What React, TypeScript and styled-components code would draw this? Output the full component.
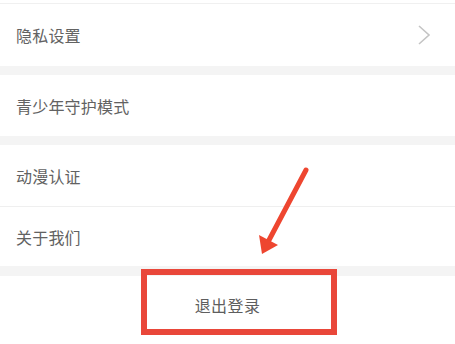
import React from 'react';
import styled, { createGlobalStyle } from 'styled-components';

const GlobalStyle = createGlobalStyle`
  html, body {
    margin: 0;
    padding: 0;
    background: #ffffff;
  }
  body {
    font-family: "Noto Sans CJK SC", "Noto Sans", sans-serif;
  }
`;

const Page = styled.div`
  position: relative;
  width: 455px;
  height: 344px;
  overflow: hidden;
  background: #f4f4f4;
`;

const Group = styled.div`
  background: #ffffff;
  display: flex;
  flex-direction: column;
`;

const TopEdge = styled.div`
  height: 3px;
  background: #ffffff;
  border-bottom: 1px solid #f0f0f0;
`;

const Row = styled.div<{ $h: number; $divider?: boolean }>`
  height: ${p => p.$h}px;
  display: flex;
  align-items: center;
  justify-content: space-between;
  padding: 0 24px 0 16px;
  box-sizing: border-box;
  border-bottom: ${p => (p.$divider ? '1px solid #efefef' : 'none')};
`;

const Label = styled.span`
  font-size: 16px;
  letter-spacing: 0.2px;
  color: #626262;
`;

const Gap = styled.div<{ $h: number }>`
  height: ${p => p.$h}px;
  background: #f4f4f4;
`;

const Logout = styled.div`
  height: 68px;
  background: #ffffff;
  display: flex;
  justify-content: center;
  padding-top: 18px;
  box-sizing: border-box;
`;

const LogoutText = styled.span`
  font-size: 16px;
  letter-spacing: 0.4px;
  color: #5e5e5e;
  line-height: 22px;
`;

const Highlight = styled.div`
  position: absolute;
  left: 141px;
  top: 269px;
  width: 196px;
  height: 66px;
  border: 6px solid #e9473a;
  box-sizing: border-box;
`;

const Overlay = styled.svg`
  position: absolute;
  left: 0;
  top: 0;
  pointer-events: none;
`;

const Chevron = () => (
  <svg width="14" height="22" viewBox="0 0 14 22">
    <path d="M2 2 L12 11 L2 20" fill="none" stroke="#c4c4c4" strokeWidth="1.6" />
  </svg>
);

export default function App() {
  return (
    <Page>
      <GlobalStyle />
      <TopEdge />
      <Group>
        <Row $h={62}>
          <Label>隐私设置</Label>
          <Chevron />
        </Row>
      </Group>
      <Gap $h={9} />
      <Group>
        <Row $h={61}>
          <Label>青少年守护模式</Label>
        </Row>
      </Group>
      <Gap $h={9} />
      <Group>
        <Row $h={62} $divider>
          <Label>动漫认证</Label>
        </Row>
        <Row $h={59}>
          <Label>关于我们</Label>
        </Row>
      </Group>
      <Gap $h={10} />
      <Logout>
        <LogoutText>退出登录</LogoutText>
      </Logout>
      <Highlight />
      <Overlay width="455" height="344" viewBox="0 0 455 344">
        <line x1="306" y1="170" x2="268" y2="242" stroke="#ee4630" strokeWidth="5" strokeLinecap="round" />
        <polygon points="262,254 259,235 278,245" fill="#ee4630" />
      </Overlay>
    </Page>
  );
}
